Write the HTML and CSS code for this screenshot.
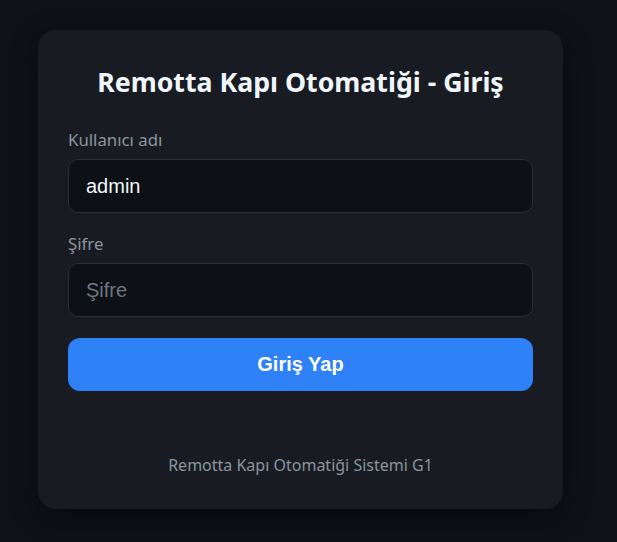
FILE: index.html
```html
<!doctype html>
<html lang="tr">
  <head>
    <meta charset="utf-8" />
    <meta name="viewport" content="width=device-width, initial-scale=1" />
    <title>Remotta Kapı Otomatiği - Giriş</title>
    <link rel="stylesheet" href="styles.css">
  </head>

  <body>
    <main class="login-card">
      <h2 class="login-title">Remotta Kapı Otomatiği - Giriş</h2>

      <form class="login-form">
        <div class="field">
          <label for="username">Kullanıcı adı</label>
          <input type="text" id="username" name="username" value="admin" />
        </div>

        <div class="field">
          <label for="password">Şifre</label>
          <input type="password" id="password" name="password" placeholder="Şifre" />
        </div>

        <button type="submit">Giriş Yap</button>
      </form>

      <p class="login-footer">Remotta Kapı Otomatiği Sistemi G1</p>
    </main>
  </body>
</html>
```

FILE: styles.css
```css
body {
  margin: 0;
  padding: 30px 38px;
  font-family: "Segoe UI", "Noto Sans", sans-serif;
  background-color: #0e1117;
  color: #c9d1d9;
  min-height: 100vh;
  box-sizing: border-box;
}

.login-card {
  width: 525px;
  box-sizing: border-box;
  padding: 30px;
  background-color: #181c22;
  border-radius: 18px;
  box-shadow: 0 8px 28px rgba(0, 0, 0, 0.45);
}

.login-title {
  margin: 0 0 24px;
  text-align: center;
  font-size: 26.7px;
  line-height: 44px;
  font-weight: 700;
  color: #f0f6fc;
}

.login-form {
  display: flex;
  flex-direction: column;
}

.field {
  display: flex;
  flex-direction: column;
  margin-bottom: 19px;
}

label {
  font-size: 16.8px;
  line-height: 24px;
  color: #8b949e;
  margin-bottom: 7px;
}

input {
  height: 54px;
  box-sizing: border-box;
  padding: 0 17px;
  background-color: #0d1014;
  border: 1px solid #2a2e35;
  border-radius: 10px;
  color: #f0f6fc;
  font-family: "Liberation Sans", Arial, sans-serif;
  font-size: 20px;
  outline: none;
}

input::placeholder {
  color: #6e7681;
}

button {
  margin-top: 2px;
  height: 53px;
  background-color: #2f81f7;
  color: #ffffff;
  border: none;
  border-radius: 12px;
  font-family: "Liberation Sans", Arial, sans-serif;
  font-size: 20px;
  font-weight: 700;
  cursor: pointer;
}

.login-footer {
  margin: 62px 0 2px;
  text-align: center;
  font-size: 16px;
  line-height: 24px;
  color: #8b949e;
}
```
